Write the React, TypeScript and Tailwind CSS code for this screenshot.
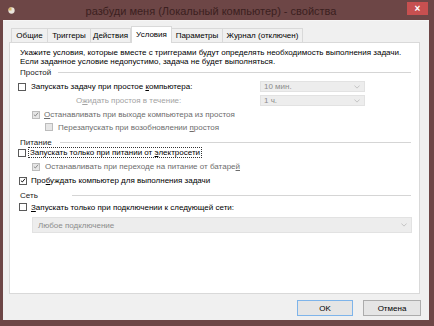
import React from "react";

const FONT = { fontFamily: '"Liberation Sans", Arial, sans-serif' };

function Check({ checked, disabled }: { checked?: boolean; disabled?: boolean }) {
  return (
    <span
      className={`flex h-[8px] w-[8px] shrink-0 items-center justify-center border ${
        disabled ? "border-[#bcbcbc] bg-[#e6e6e6]" : "border-[#5a5a5a] bg-white"
      }`}
    >
      {checked && (
        <svg viewBox="0 0 8 8" className="h-[7px] w-[7px]">
          <path
            d="M1.2 4.2 L3.1 6 L6.8 1.6"
            fill="none"
            stroke={disabled ? "#8a8a8a" : "#111"}
            strokeWidth={1.3}
          />
        </svg>
      )}
    </span>
  );
}

function Combo({ text, className }: { text: string; className: string }) {
  return (
    <div
      className={`flex items-center justify-between border border-[#e2e2e2] bg-[#ededed] pl-[3px] pr-[4px] text-[#8c8c8c] ${className}`}
    >
      <span>{text}</span>
      <svg viewBox="0 0 8 5" className="h-[4px] w-[6px]">
        <path d="M0.5 0.5 L4 4 L7.5 0.5" fill="none" stroke="#b5b5b5" strokeWidth={1} />
      </svg>
    </div>
  );
}

function Group({ label, labelW, className }: { label: string; labelW: string; className: string }) {
  return (
    <div className={`flex h-[10px] items-center pl-[10px] pr-[8px] text-[#1a1a1a] ${className}`}>
      <span className={`shrink-0 ${labelW}`}>{label}</span>
      <span className="h-px flex-1 bg-[#d5d5d5]" />
    </div>
  );
}

const tabs = [
  { label: "Общие", w: "w-[37px]" },
  { label: "Триггеры", w: "w-[43px]" },
  { label: "Действия", w: "w-[40px]" },
  { label: "Условия", w: "w-[41px]", active: true },
  { label: "Параметры", w: "w-[51px]" },
  { label: "Журнал (отключен)", w: "w-[80px]" },
];

export default function App() {
  return (
    <div
      className="flex h-[326px] w-[434px] flex-col bg-[#6d4646] text-[8px] leading-[9px] text-black"
      style={FONT}
    >
      {/* title bar */}
      <div className="flex h-[20px] items-start">
        <svg viewBox="0 0 8 8" className="ml-[8px] mt-[7px] h-[7px] w-[7px] shrink-0">
          <circle cx="4" cy="4" r="3.6" fill="#e9e4dc" />
          <path d="M4 4 L4 0.4 A3.6 3.6 0 0 0 0.4 4 Z" fill="#d8b66a" />
        </svg>
        <div className="flex-1 pt-[5px] text-center text-[11px] leading-[12px] text-[#3b2020]">
          разбуди меня (Локальный компьютер) - свойства
        </div>
        <div className="mr-[6px] mt-[2px] flex h-[13px] w-[21px] items-center justify-center bg-[#c75050] text-[10px] font-bold leading-none text-white">
          ×
        </div>
      </div>

      {/* client */}
      <div className="ml-[3px] flex h-[300px] w-[426px] flex-col border-t border-[#f6f6f6] bg-[#f0f0f0] pt-[5px]">
        <div className="ml-[8px] flex h-[16px] items-end">
          {tabs.map((t) =>
            t.active ? (
              <div
                key={t.label}
                className={`relative z-10 -mb-px flex h-[17px] items-start justify-center border border-b-0 border-[#d9d9d9] bg-white pt-[3px] ${t.w}`}
              >
                {t.label}
              </div>
            ) : (
              <div
                key={t.label}
                className={`flex h-[14px] items-center justify-center border border-b-0 border-l-0 border-[#d9d9d9] bg-[#f0f0f0] first:border-l ${t.w}`}
              >
                {t.label}
              </div>
            )
          )}
        </div>

        <div className="ml-[6px] flex h-[252px] w-[411px] flex-col border border-[#d9d9d9] bg-white">
          <div className="mt-[5px] pl-[10px]">
            <div>Укажите условия, которые вместе с триггерами будут определять необходимость выполнения задачи.</div>
            <div>Если заданное условие недопустимо, задача не будет выполняться.</div>
          </div>

          <Group label="Простой" labelW="w-[38px]" className="mt-px" />

          <div className="mt-[3px] flex h-[13px] items-center pl-[8px]">
            <div className="flex w-[242px] items-center gap-[5px]">
              <Check />
              <span>
                Запускать задачу при простое <u>к</u>омпьютера:
              </span>
            </div>
            <Combo text="10 мин." className="h-[11px] w-[105px]" />
          </div>

          <div className="mt-px flex h-[13px] items-center pl-[8px]">
            <div className="w-[242px] pl-[58px] text-[#a3a3a3]">
              О<u>ж</u>идать простоя в течение:
            </div>
            <Combo text="1 ч." className="h-[11px] w-[105px]" />
          </div>

          <div className="mt-px flex h-[13px] items-center gap-[4px] pl-[22px] text-[#6d6d6d]">
            <Check checked disabled />
            <span>
              <u>О</u>станавливать при выходе компьютера из простоя
            </span>
          </div>

          <div className="flex h-[12px] items-center gap-[5px] pl-[35px] text-[#6d6d6d]">
            <Check disabled />
            <span>
              Перезапускать при возобновлении <u>п</u>ростоя
            </span>
          </div>

          <Group label="Питание" labelW="w-[40px]" className="mt-[4px]" />

          <div className="flex h-[11px] items-center gap-[3px] pl-[8px]">
            <Check />
            <span className="px-px outline outline-1 outline-dotted outline-[#333]">
              Запускать только при питании от <u>э</u>лектросети
            </span>
          </div>

          <div className="mt-[2px] flex h-[13px] items-center gap-[5px] pl-[22px] text-[#6d6d6d]">
            <Check checked disabled />
            <span>
              Останавливать при переходе на питание от батаре<u>й</u>
            </span>
          </div>

          <div className="mt-px flex h-[13px] items-center gap-[4px] pl-[9px]">
            <Check checked />
            <span>
              Про<u>б</u>уждать компьютер для выполнения задачи
            </span>
          </div>

          <Group label="Сеть" labelW="w-[52px]" className="mt-[3px]" />

          <div className="mt-px flex h-[12px] items-center gap-[4px] pl-[9px]">
            <Check />
            <span>
              <u>З</u>апускать только при подключении к следующей сети:
            </span>
          </div>

          <Combo text="Любое подключение" className="ml-[22px] mt-[4px] h-[16px] w-[380px] pl-[5px]" />
        </div>

        <div className="mt-[6px] flex justify-end gap-[10px] pr-[8px]">
          <div className="flex h-[16px] w-[56px] items-center justify-center border border-[#7eb4ea] bg-[#e5e5e5]">
            OK
          </div>
          <div className="flex h-[16px] w-[58px] items-center justify-center border border-[#acacac] bg-[#e5e5e5]">
            Отмена
          </div>
        </div>
      </div>
    </div>
  );
}
